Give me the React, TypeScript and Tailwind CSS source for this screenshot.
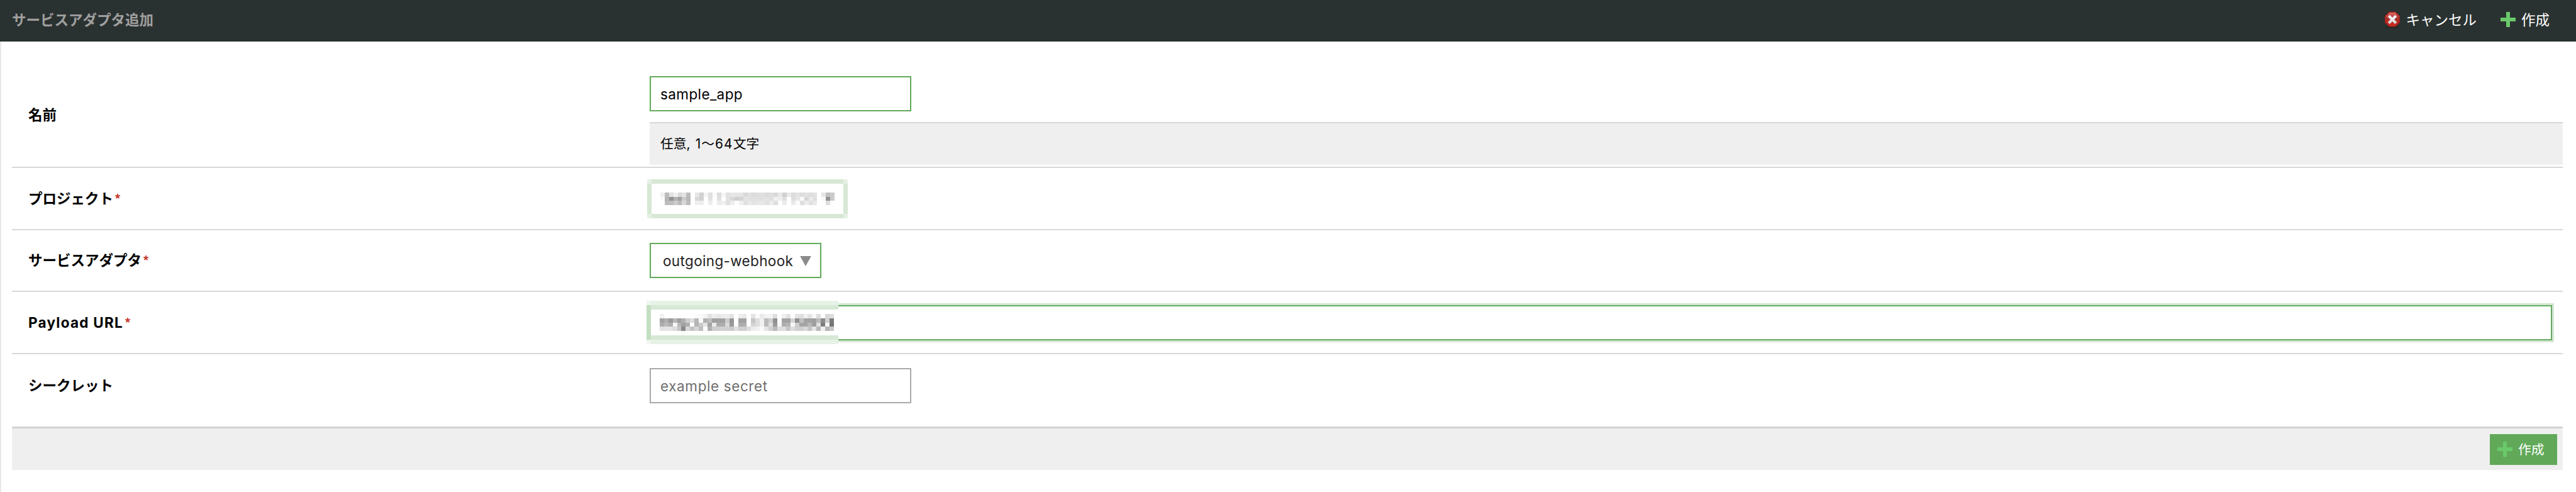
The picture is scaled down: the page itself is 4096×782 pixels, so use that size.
import React from "react";

const NAME_MASK = [
  "f0 bb e2 f0 d9 e3 bc ff e7 d1 f5 e0 fb dd f5 e1 e7 e5 e5 d9 e0 db de e0 da df d9 e8 d0 e9 dc e3 dd e2 dd e2 ff e5 c0 cb",
  "f9 b5 92 b2 a2 cb b7 ff d9 d1 ff e2 ff e1 ff e2 d9 d0 d4 e4 e0 e0 e0 e0 e3 de f0 ed de ff de e7 f9 d5 eb df ff fa 92 cb",
  "ff bd be cb ba d8 bc ff ef ef ff ed ff ec f0 e0 ee fc ef e0 e9 e4 e7 e7 e0 eb df fd ec ff ea fb df ec e1 ea ff ff de fd",
];

const URL_MASK = [
  "f2 ff ff ff ff ff ff ff fb f9 f3 e1 ed e8 ec ed e3 ff ed ea ff e4 fa ea f3 f3 df ff f0 e2 ff e4 df f1 e4 f8 dc fe d7 dd",
  "a3 b0 9a b8 9f b0 cf dc b6 f8 b0 bd 9f a2 a2 cb 96 ff a2 a2 ff c6 dd f0 bb cf 90 ff a3 a3 d6 90 bf a3 a3 9f bb 8b cf 7b",
  "ae b9 ae f6 b9 a2 ae ff b3 cb e3 a3 eb ad ad d9 9a fd ad ad fd d3 dd f1 bb df 98 f6 ae b5 f7 cd a5 a5 b8 9f df 7c f5 74",
  "e2 e4 e3 dc c6 8a d8 c3 d6 bd fd b0 cd cf d2 cf cb df cf cf dd ec f1 f9 e3 d2 bb dd dd c7 dd cf cf da c5 e4 b9 ef b5 c8",
  "ff ff ff ff ff fa",
];

function Cells({ rows, x, y }: { rows: string[]; x: number; y: number }) {
  return (
    <g>
      {rows.map((row, r) =>
        row
          .split(" ")
          .map((v, c) =>
            v === "ff" ? null : (
              <rect key={r + "-" + c} x={x + c} y={y + r} width={1} height={1} fill={"#" + v + v + v} />
            )
          )
      )}
    </g>
  );
}

function Plus() {
  return (
    <svg viewBox="0 0 28 28" className="size-[24px] shrink-0" shapeRendering="crispEdges">
      <path d="M10 0h8v10h10v8H18v10h-8V18H0v-8h10z" fill="#6ac96a" />
    </svg>
  );
}

function CancelIcon() {
  return (
    <svg viewBox="0 0 32 32" className="size-[28px] shrink-0">
      <defs>
        <linearGradient id="stop" x1="0" y1="0" x2="0" y2="1">
          <stop offset="0" stopColor="#e0706a" />
          <stop offset="0.45" stopColor="#a8302b" />
          <stop offset="1" stopColor="#cf2a1e" />
        </linearGradient>
        <linearGradient id="cross" gradientUnits="userSpaceOnUse" x1="0" y1="9" x2="0" y2="23">
          <stop offset="0" stopColor="#ffffff" />
          <stop offset="1" stopColor="#d6d6d6" />
        </linearGradient>
      </defs>
      <ellipse cx="16" cy="29.5" rx="12" ry="2" fill="#1f2524" />
      <path d="M10.5 2.5h11l7.5 7.5v11l-7.5 7.5h-11L3 21V10z" fill="url(#stop)" stroke="#a01f1a" strokeWidth="1.6" />
      <path d="M9.5 9.5l13 13M22.5 9.5l-13 13" stroke="url(#cross)" strokeWidth="4.8" />
    </svg>
  );
}

function Row({
  label,
  required,
  className,
  labelClassName = "",
  children,
}: {
  label: string;
  required?: boolean;
  className: string;
  labelClassName?: string;
  children: React.ReactNode;
}) {
  return (
    <div className={"flex items-center " + className}>
      <div
        className={
          "flex w-[1014px] shrink-0 items-center pl-[26px] text-[22.5px] leading-[32px] font-bold " + labelClassName
        }
      >
        <span>{label}</span>
        {required && (
          <span className="ml-[2px] font-['Noto_Sans_CJK_JP',sans-serif] text-[20px] tracking-normal text-[#c9372c]">
            *
          </span>
        )}
      </div>
      <div className="flex grow flex-col items-start">{children}</div>
    </div>
  );
}

export default function App() {
  return (
    <div className="flex h-[782px] w-[4096px] flex-col overflow-hidden bg-white font-['Inter','Noto_Sans_CJK_JP',sans-serif] text-black">
      <header className="flex h-[66px] shrink-0 items-center justify-between border-b border-[#222828] bg-[#2a3231] pr-[42px] pb-[3px] pl-[19px] font-['Noto_Sans_CJK_JP',sans-serif] text-[22.5px]">
        <h1 className="font-bold text-[#a09f9f]">サービスアダプタ追加</h1>
        <div className="flex items-center text-white">
          <CancelIcon />
          <span className="ml-[7px]">キャンセル</span>
          <span className="ml-[38px] flex items-center gap-[9px]">
            <Plus />
            作成
          </span>
        </div>
      </header>

      <main className="flex grow flex-col border-l-2 border-[#e8e8e8] pr-[21px] pl-[17px]">
        <Row label="名前" className="h-[201px] border-b-2 border-[#d8d8d8]" labelClassName="pt-[35px]">
          <div className="mt-[52px] flex h-[56px] w-[416px] items-center border-2 border-[#61a959] pt-[2px] pl-[15px] text-[22.5px] tracking-[0.4px]">
            sample_app
          </div>
          <div className="mt-[17px] flex h-[68px] w-full items-center border-t-2 border-[#d8d8d8] bg-[#efefef] pl-[17px] text-[20.8px] whitespace-pre">
            任意<span className="tracking-[1.1px]">, 1〜64</span>文字
          </div>
        </Row>

        <Row label="プロジェクト" required className="h-[99px] border-b-2 border-[#d8d8d8]">
          <svg
            viewBox="0 0 46 9"
            preserveAspectRatio="none"
            shapeRendering="crispEdges"
            className="-ml-[4px] h-[62px] w-[319px]"
          >
            <path d="M0 0h46v9H0z" fill="#e6f1e5" />
            <path d="M1 0h44v9H1zM0 1h46v7H0z" fill="#d7e8d5" />
            <path d="M1 1h44v7H1z" fill="#fff" />
            <Cells rows={NAME_MASK} x={3} y={3} />
          </svg>
        </Row>

        <Row label="サービスアダプタ" required className="h-[98px] border-b-2 border-[#d8d8d8]">
          <div className="flex h-[56px] w-[273px] items-center justify-between border-2 border-[#61a959] pt-[2px] pr-[14px] pl-[19px] text-[22.5px] tracking-[0.35px] text-[#222]">
            outgoing-webhook
            <svg viewBox="0 0 20 18" className="h-[16px] w-[18px]">
              <path d="M0 0h20L10 18z" fill="#8a8a8a" />
            </svg>
          </div>
        </Row>

        <Row
          label="Payload URL"
          required
          className="h-[99px] border-b-2 border-[#d8d8d8]"
          labelClassName="tracking-[1.25px]"
        >
          <div className="-ml-[5px] flex items-center">
            <svg
              viewBox="0 0 44 10"
              preserveAspectRatio="none"
              shapeRendering="crispEdges"
              className="h-[69px] w-[305px]"
            >
              <path d="M0 0h44v10H0z" fill="#e7f2e6" />
              <path d="M0 0h1v1H0zM0 9h1v1H0z" fill="#eff6ee" />
              <path d="M1 1h43v8H1z" fill="#d7e8d5" />
              <path d="M0 1h1v8H0z" fill="#c3dfc0" />
              <path d="M1 2h43v6H1z" fill="#fff" />
              <Cells rows={URL_MASK} x={3} y={3} />
            </svg>
            <div className="h-[62px] w-[2728px] border-y-3 border-r-3 border-[#d3e8d1]">
              <div className="h-full w-full border-y-2 border-r-2 border-[#66a962]" />
            </div>
          </div>
        </Row>

        <Row label="シークレット" className="h-[99px]">
          <div className="flex h-[56px] w-[416px] items-center border-2 border-[#a9a9a9] pt-[2px] pl-[15px] text-[22.5px] tracking-[0.6px] text-[#6f6f6f]">
            example secret
          </div>
        </Row>

        <footer className="mt-[16px] flex h-[69px] items-center justify-end border-t-3 border-[#d3d3d3] bg-[#efefef] pr-[9px]">
          <button className="flex h-[49px] w-[107px] items-center gap-[9px] bg-[#61a959] pl-[12px] font-['Noto_Sans_CJK_JP',sans-serif] text-[20.8px] text-white">
            <Plus />
            作成
          </button>
        </footer>
      </main>
    </div>
  );
}
